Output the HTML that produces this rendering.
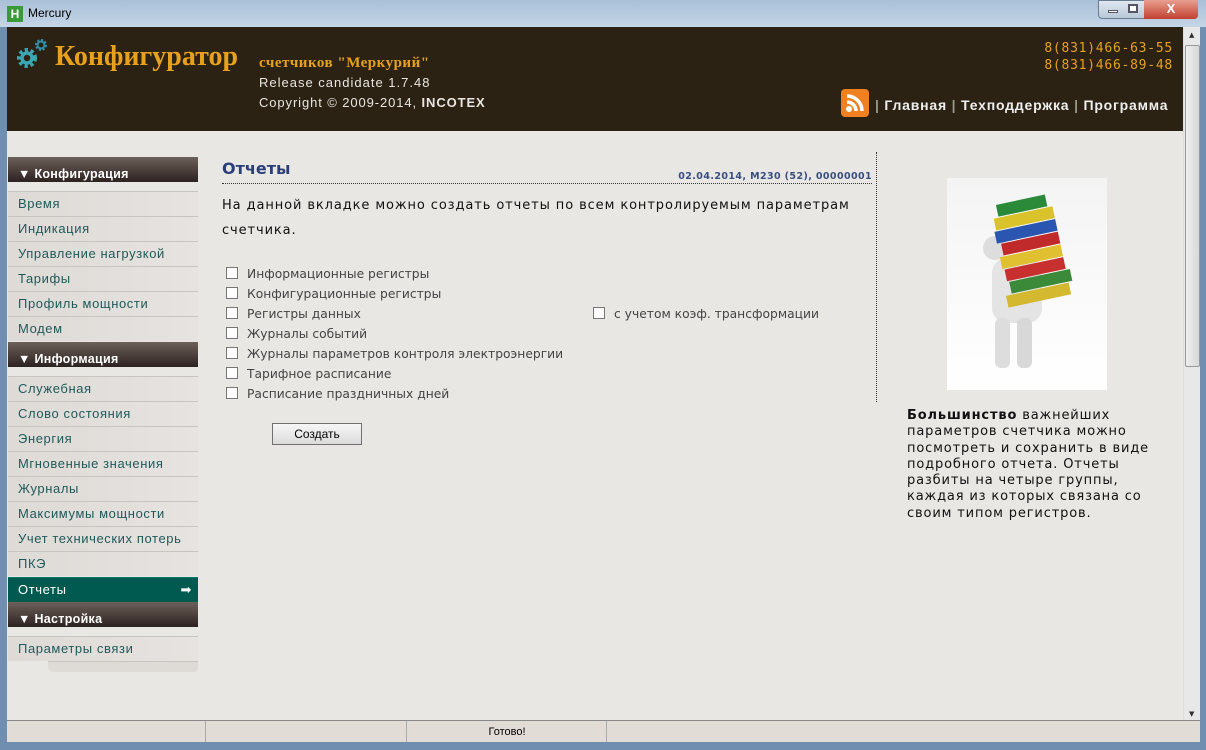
<!DOCTYPE html>
<html><head><meta charset="utf-8"><style>
*{margin:0;padding:0;box-sizing:border-box}
body{width:1206px;height:750px;overflow:hidden;position:relative;background:#6f8eb0;font-family:"DejaVu Sans","Liberation Sans",sans-serif}
.abs{position:absolute}
#title{left:0;top:0;width:1206px;height:27px;background:linear-gradient(#a9c0d8,#c4d5e6);}
#hdr{left:7px;top:27px;width:1176px;height:104px;background:#2c2213}
#content{left:7px;top:131px;width:1176px;height:589px;background:#e9e7e4}
#sb{left:1183px;top:27px;width:17px;height:693px;background:#e8e8e8;border-left:1px solid #ddd}
#status{left:7px;top:720px;width:1193px;height:22px;background:#e2dcd7;border-top:1px solid #888;font-family:"Liberation Sans",sans-serif;font-size:11px}
.item{position:absolute;left:8px;width:190px;height:25px;border-top:1px solid #c8c4c0;background:linear-gradient(90deg,#dedad6,#e6e3e0);padding-left:10px;line-height:24px;font-family:"Liberation Sans",sans-serif;font-size:13px;color:#1f5a5a;letter-spacing:.6px;white-space:nowrap}
.sec{position:absolute;left:8px;width:190px;height:25px;background:linear-gradient(#6d605a,#2c2220);color:#fff;font-weight:bold;font-family:"Liberation Sans",sans-serif;font-size:12.5px;padding-left:10px;line-height:34px;letter-spacing:.3px}
.cb{position:absolute;width:12px;height:12px;border:1px solid #777;background:#fff}
.cl{position:absolute;font-size:12.3px;color:#444;line-height:16px;white-space:nowrap}
</style></head><body>
<div id="title" class="abs"></div>
<div class="abs" style="left:7px;top:6px;width:16px;height:16px;background:#3a9a3a;color:#fff;font:bold 12px 'Liberation Sans';text-align:center;line-height:16px">H</div>
<div class="abs" style="left:28px;top:6px;font:12px 'Liberation Sans',sans-serif;color:#000">Mercury</div>
<div class="abs" style="left:1098px;top:0;width:100px;height:19px;border-radius:0 0 4px 4px;background:linear-gradient(#dfe7f0,#b9c8d8);border:1px solid #6a7d93"></div>
<div class="abs" style="left:1144px;top:0;width:54px;height:19px;background:linear-gradient(#e8a090,#c24030);border-radius:0 0 4px 0;color:#fff;font:bold 13px 'Liberation Sans';text-align:center;line-height:18px">X</div>
<div class="abs" style="left:1108px;top:10px;width:10px;height:3px;background:#fff;border:1px solid #556"></div>
<div class="abs" style="left:1128px;top:4px;width:10px;height:9px;border:2px solid #556;background:#fff"></div>
<div id="hdr" class="abs"></div>
<svg class="abs" style="left:16px;top:37px" width="34" height="34" viewBox="0 0 34 34"><circle cx="11" cy="21" r="7.5" fill="none" stroke="#3aa7b3" stroke-width="5" stroke-dasharray="3 2.5"/><circle cx="11" cy="21" r="5" fill="none" stroke="#3aa7b3" stroke-width="3.5"/><circle cx="25" cy="8" r="4.5" fill="none" stroke="#2f8fa8" stroke-width="3" stroke-dasharray="2 1.5"/><circle cx="25" cy="8" r="3.5" fill="none" stroke="#2f8fa8" stroke-width="2"/></svg>
<div class="abs" style="left:55px;top:41px;font:bold 28px 'Liberation Serif',serif;color:#e8a11a">Конфигуратор</div>
<div class="abs" style="left:259px;top:55px;font:bold 15px 'Liberation Serif',serif;color:#e8a11a;letter-spacing:.5px">счетчиков "Меркурий"</div>
<div class="abs" style="left:259px;top:75px;font-size:13px;color:#e8e6e0;letter-spacing:1px;font-family:'Liberation Sans',sans-serif">Release candidate 1.7.48</div>
<div class="abs" style="left:259px;top:95px;font-size:13px;color:#e8e6e0;letter-spacing:.9px;font-family:'Liberation Sans',sans-serif">Copyright © 2009-2014, <b>INCOTEX</b></div>
<div class="abs" style="left:990px;top:40px;width:183px;text-align:right;font:13px 'DejaVu Sans Mono',monospace;color:#e8a11a;line-height:17px;letter-spacing:.75px">8(831)466-63-55<br>8(831)466-89-48</div>
<div class="abs" style="left:841px;top:89px;width:28px;height:28px;border-radius:4px;background:#f08020"><svg width="28" height="28"><circle cx="8" cy="20" r="3" fill="#fff"/><path d="M6 13a9 9 0 0 1 9 9M6 7a15 15 0 0 1 15 15" stroke="#fff" stroke-width="3.5" fill="none"/></svg></div>
<div class="abs" style="left:875px;top:97px;font:bold 14px 'Liberation Sans',sans-serif;color:#eee;letter-spacing:.8px;white-space:nowrap"><span style="color:#998">|</span> Главная <span style="color:#998">|</span> Техподдержка <span style="color:#998">|</span> Программа</div>
<div id="content" class="abs"></div>
<div id="sb" class="abs"><div style="position:absolute;left:1px;top:18px;width:15px;height:322px;background:linear-gradient(90deg,#eee,#d8d8d8);border:1px solid #999;border-radius:2px"></div><div style="position:absolute;top:4px;left:5px;font-size:7px;color:#333">▲</div><div style="position:absolute;bottom:2px;left:5px;font-size:7px;color:#333">▼</div></div>

<div class="sec" style="top:157px">▼ Конфигурация</div>
<div class="item" style="top:191px">Время</div>
<div class="item" style="top:216px">Индикация</div>
<div class="item" style="top:241px">Управление нагрузкой</div>
<div class="item" style="top:266px">Тарифы</div>
<div class="item" style="top:291px">Профиль мощности</div>
<div class="item" style="top:316px">Модем</div>
<div class="sec" style="top:342px">▼ Информация</div>
<div class="item" style="top:376px">Служебная</div>
<div class="item" style="top:401px">Слово состояния</div>
<div class="item" style="top:426px">Энергия</div>
<div class="item" style="top:451px">Мгновенные значения</div>
<div class="item" style="top:476px">Журналы</div>
<div class="item" style="top:501px">Максимумы мощности</div>
<div class="item" style="top:526px">Учет технических потерь</div>
<div class="item" style="top:551px">ПКЭ</div>
<div class="item" style="top:577px;background:#005a50;color:#fff;border-top:1px solid #0a7a6a">Отчеты<span style="position:absolute;right:6px;top:0">➡</span></div>
<div class="sec" style="top:602px">▼ Настройка</div>
<div class="item" style="top:636px">Параметры связи</div>
<div class="abs" style="left:48px;top:661px;width:150px;height:11px;background:#dedad6;border-top:1px solid #c8c4c0;border-radius:0 0 4px 6px"></div>

<div class="abs" style="left:222px;top:159px;font:bold 16px 'DejaVu Sans',sans-serif;color:#2a3f7a">Отчеты</div>
<div class="abs" style="left:222px;top:183px;width:650px;border-top:1px dotted #333"></div>
<div class="abs" style="left:600px;top:171px;width:272px;text-align:right;font:bold 9.5px 'DejaVu Sans',sans-serif;color:#3a4f80;letter-spacing:.4px">02.04.2014, M230 (52), 00000001</div>
<div class="abs" style="left:876px;top:152px;height:250px;border-left:1px dotted #333"></div>
<div class="abs" style="left:222px;top:193px;width:640px;font:13px 'DejaVu Sans',sans-serif;color:#111;line-height:25px;letter-spacing:.9px">На данной вкладке можно создать отчеты по всем контролируемым параметрам счетчика.</div>
<div class="cb" style="left:226px;top:267px"></div><div class="cl" style="left:247px;top:266px">Информационные регистры</div>
<div class="cb" style="left:226px;top:287px"></div><div class="cl" style="left:247px;top:286px">Конфигурационные регистры</div>
<div class="cb" style="left:226px;top:307px"></div><div class="cl" style="left:247px;top:306px">Регистры данных</div>
<div class="cb" style="left:226px;top:327px"></div><div class="cl" style="left:247px;top:326px">Журналы событий</div>
<div class="cb" style="left:226px;top:347px"></div><div class="cl" style="left:247px;top:346px">Журналы параметров контроля электроэнергии</div>
<div class="cb" style="left:226px;top:367px"></div><div class="cl" style="left:247px;top:366px">Тарифное расписание</div>
<div class="cb" style="left:226px;top:387px"></div><div class="cl" style="left:247px;top:386px">Расписание праздничных дней</div>
<div class="cb" style="left:593px;top:307px"></div><div class="cl" style="left:614px;top:306px">с учетом коэф. трансформации</div>
<div class="abs" style="left:272px;top:423px;width:90px;height:22px;background:linear-gradient(#f6f6f6,#dcdcdc);border:1px solid #707070;font:12px 'Liberation Sans',sans-serif;text-align:center;line-height:20px;color:#000">Создать</div>

<div class="abs" style="left:947px;top:178px;width:160px;height:212px;background:linear-gradient(#f4f4f4,#fff)">
<svg width="160" height="212"><ellipse cx="48" cy="70" rx="12" ry="12" fill="#ddd"/><rect x="45" y="80" width="50" height="65" rx="15" fill="#e4e4e4"/><rect x="48" y="140" width="15" height="50" rx="6" fill="#ddd"/><rect x="70" y="140" width="15" height="50" rx="6" fill="#d8d8d8"/>
<g transform="rotate(-12 90 100)"><rect x="65" y="20" width="50" height="12" fill="#2a8a3a"/><rect x="60" y="33" width="60" height="12" fill="#d9c22a"/><rect x="58" y="46" width="62" height="12" fill="#2a55b0"/><rect x="62" y="59" width="58" height="12" fill="#c02a2a"/><rect x="58" y="72" width="62" height="12" fill="#e0c030"/><rect x="60" y="85" width="60" height="12" fill="#c83030"/><rect x="62" y="98" width="62" height="12" fill="#3a8a3a"/><rect x="56" y="111" width="64" height="12" fill="#d4b830"/></g></svg></div>
<div class="abs" style="left:907px;top:408px;width:260px;font:13px 'DejaVu Sans',sans-serif;color:#111;line-height:16.3px;letter-spacing:.85px"><b>Большинство</b> важнейших параметров счетчика можно посмотреть и сохранить в виде подробного отчета. Отчеты разбиты на четыре группы, каждая из которых связана со своим типом регистров.</div>

<div id="status" class="abs">
<div style="position:absolute;left:198px;top:0;height:21px;border-left:1px solid #aaa"></div>
<div style="position:absolute;left:399px;top:0;height:21px;border-left:1px solid #aaa"></div>
<div style="position:absolute;left:599px;top:0;height:21px;border-left:1px solid #aaa"></div>
<div style="position:absolute;left:400px;width:200px;top:5px;text-align:center">Готово!</div>
</div>
</body></html>
